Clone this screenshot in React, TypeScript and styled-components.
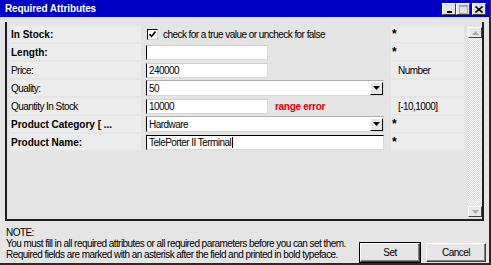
import React from 'react'
import styled, { createGlobalStyle } from 'styled-components'

const GlobalStyle = createGlobalStyle`
  html, body {
    margin: 0;
    padding: 0;
  }
  body {
    font-family: 'Liberation Sans', Arial, sans-serif;
    font-size: 10px;
    letter-spacing: -0.55px;
    color: #000;
  }
`

const Window = styled.div`
  width: 491px;
  height: 265px;
  box-sizing: border-box;
  background: #e5e5e5;
  border-right: 2px solid #2a2a2a;
  border-bottom: 2px solid #2a2a2a;
  display: flex;
  flex-direction: column;
  overflow: hidden;
`

const TitleBar = styled.div`
  height: 17px;
  flex: none;
  background: #0000c4;
  color: #fff;
  font-weight: bold;
  font-size: 10px;
  letter-spacing: -0.1px;
  display: flex;
  align-items: center;
  padding: 0 3px 0 5px;
`

const Title = styled.span`
  flex: 1;
`

const WinButtons = styled.div`
  display: flex;
  margin-top: 1px;
`

const WinButton = styled.div<{ $gap?: boolean }>`
  width: 14px;
  height: 12px;
  box-sizing: border-box;
  background: #e2e2e2;
  border-top: 1px solid #fff;
  border-left: 1px solid #fff;
  border-bottom: 1px solid #404040;
  border-right: 1px solid #404040;
  margin-left: ${p => (p.$gap ? '2px' : '0')};
  display: flex;
  align-items: center;
  justify-content: center;
`

const MinBar = styled.div`
  width: 5px;
  height: 2px;
  background: #000;
  margin-top: 5px;
`

const MaxBox = styled.div`
  width: 7px;
  height: 6px;
  border: 1px solid #a8a8a8;
  border-top-width: 2px;
`

const Body = styled.div`
  flex: 1;
  display: flex;
  flex-direction: column;
  padding: 5px 5px 0 5px;
  min-height: 0;
`

const Panel = styled.div`
  height: 197px;
  flex: none;
  display: flex;
  border-left: 2px solid #1e1e1e;
  border-right: 2px solid #1e1e1e;
  border-bottom: 2px solid #1e1e1e;
  background: #e4e4e4;
`

const Grid = styled.div`
  flex: 1;
  display: grid;
  grid-template-columns: 131px 250px 73px;
  grid-auto-rows: 16px;
  row-gap: 2px;
  align-content: start;
  padding: 4px 4px 0 3px;
`

const LabelCell = styled.div<{ $required?: boolean }>`
  background: #ececec;
  display: flex;
  align-items: center;
  padding-left: 1px;
  font-weight: ${p => (p.$required ? 'bold' : 'normal')};
  letter-spacing: ${p => (p.$required ? '0' : '-0.55px')};
  white-space: nowrap;
  overflow: hidden;
`

const FieldCell = styled.div`
  display: flex;
  align-items: center;
  padding-left: 5px;
  white-space: nowrap;
`

const InfoCell = styled.div<{ $mark?: boolean }>`
  background: #ececec;
  display: flex;
  align-items: center;
  padding-left: ${p => (p.$mark ? '1px' : '7px')};
  font-weight: ${p => (p.$mark ? 'bold' : 'normal')};
  font-size: ${p => (p.$mark ? '12px' : '10px')};
`

const TextField = styled.div<{ $wide?: boolean; $focused?: boolean }>`
  width: ${p => (p.$wide ? '238px' : '122px')};
  height: 15px;
  flex: none;
  box-sizing: border-box;
  background: #fff;
  border: 1px solid #d8d8d8;
  border-left: 1px solid #000;
  border-top: 1px solid ${p => (p.$focused ? '#000' : '#d0d0d0')};
  padding-left: 2px;
  display: flex;
  align-items: center;
  white-space: nowrap;
`

const Caret = styled.span`
  display: inline-block;
  width: 1px;
  height: 11px;
  background: #000;
  margin-left: 1px;
`

const Select = styled.div`
  width: 238px;
  height: 16px;
  box-sizing: border-box;
  background: #fff;
  border-left: 1px solid #000;
  border-top: 1px solid #b0b0b0;
  border-right: 1px solid #d8d8d8;
  border-bottom: 1px solid #d8d8d8;
  display: flex;
  align-items: center;
  padding-left: 2px;
`

const SelectValue = styled.span`
  flex: 1;
`

const ArrowButton = styled.div`
  width: 13px;
  height: 13px;
  box-sizing: border-box;
  background: #e6e6e6;
  border-top: 1px solid #fff;
  border-left: 1px solid #fff;
  border-bottom: 1px solid #000;
  border-right: 1px solid #000;
  display: flex;
  align-items: center;
  justify-content: center;
`

const Check = styled.div`
  width: 11px;
  height: 11px;
  flex: none;
  box-sizing: border-box;
  background: #fff;
  border-left: 1px solid #000;
  border-top: 1px solid #000;
  border-right: 1px solid #d0d0d0;
  border-bottom: 1px solid #d0d0d0;
  display: flex;
  align-items: center;
  justify-content: center;
  margin: 0 5px 0 1px;
`

const ErrorText = styled.span`
  color: #e00000;
  font-weight: bold;
  letter-spacing: -0.3px;
  margin-left: 7px;
`

const Scrollbar = styled.div`
  width: 14px;
  flex: none;
  margin: 5px 0 2px;
  display: flex;
  flex-direction: column;
  background: repeating-conic-gradient(#ffffff 0 25%, #d6d6d6 0 50%) 0 0 / 2px 2px;
`

const ScrollButton = styled.div`
  height: 11px;
  box-sizing: border-box;
  background: #e8e8e8;
  border-top: 1px solid #fff;
  border-left: 1px solid #fff;
  border-bottom: 1px solid #404040;
  border-right: 1px solid #404040;
  display: flex;
  align-items: center;
  justify-content: center;
`

const Track = styled.div`
  flex: 1;
`

const Footer = styled.div`
  flex: 1;
  display: flex;
  padding: 6px 0 1px 1px;
  margin-right: -2px;
`

const Note = styled.div`
  flex: 1;
  min-width: 0;
  line-height: 11px;
  white-space: nowrap;
`

const Buttons = styled.div`
  display: flex;
  flex: none;
  align-self: flex-end;
  gap: 6px;
`

const Button = styled.div<{ $default?: boolean }>`
  width: 60px;
  height: 19px;
  box-sizing: border-box;
  background: #e6e6e6;
  display: flex;
  align-items: center;
  justify-content: center;
  border: 1px solid;
  border-color: #fff #404040 #404040 #fff;
  box-shadow: ${p =>
    p.$default ? '0 0 0 1px #000, inset -1px -1px 0 #808080' : 'inset -1px -1px 0 #808080'};
`

const DownArrow = ({ color = '#000' }: { color?: string }) => (
  <svg width="7" height="4" viewBox="0 0 7 4">
    <path d="M0 0h7L3.5 4z" fill={color} />
  </svg>
)

const UpArrow = ({ color = '#000' }: { color?: string }) => (
  <svg width="7" height="4" viewBox="0 0 7 4">
    <path d="M0 4h7L3.5 0z" fill={color} />
  </svg>
)

const CloseGlyph = () => (
  <svg width="8" height="7" viewBox="0 0 8 7">
    <path d="M0.5 0.5L7.5 6.5M7.5 0.5L0.5 6.5" stroke="#000" strokeWidth="1.6" />
  </svg>
)

const CheckGlyph = () => (
  <svg width="7" height="7" viewBox="0 0 7 7">
    <path d="M0.5 3L2.5 5.5L6.5 0.5" stroke="#000" strokeWidth="1.7" fill="none" />
  </svg>
)

const App = () => {
  return (
    <Window>
      <GlobalStyle />
      <TitleBar>
        <Title>Required Attributes</Title>
        <WinButtons>
          <WinButton>
            <MinBar />
          </WinButton>
          <WinButton>
            <MaxBox />
          </WinButton>
          <WinButton $gap>
            <CloseGlyph />
          </WinButton>
        </WinButtons>
      </TitleBar>
      <Body>
        <Panel>
          <Grid>
            <LabelCell $required>In Stock:</LabelCell>
            <FieldCell>
              <Check>
                <CheckGlyph />
              </Check>
              check for a true value or uncheck for false
            </FieldCell>
            <InfoCell $mark>*</InfoCell>

            <LabelCell $required>Length:</LabelCell>
            <FieldCell>
              <TextField />
            </FieldCell>
            <InfoCell $mark>*</InfoCell>

            <LabelCell>Price:</LabelCell>
            <FieldCell>
              <TextField>240000</TextField>
            </FieldCell>
            <InfoCell>Number</InfoCell>

            <LabelCell>Quality:</LabelCell>
            <FieldCell>
              <Select>
                <SelectValue>50</SelectValue>
                <ArrowButton>
                  <DownArrow />
                </ArrowButton>
              </Select>
            </FieldCell>
            <InfoCell />

            <LabelCell>Quantity In Stock</LabelCell>
            <FieldCell>
              <TextField>10000</TextField>
              <ErrorText>range error</ErrorText>
            </FieldCell>
            <InfoCell>[-10,1000]</InfoCell>

            <LabelCell $required>Product Category [ ...</LabelCell>
            <FieldCell>
              <Select>
                <SelectValue>Hardware</SelectValue>
                <ArrowButton>
                  <DownArrow />
                </ArrowButton>
              </Select>
            </FieldCell>
            <InfoCell $mark>*</InfoCell>

            <LabelCell $required>Product Name:</LabelCell>
            <FieldCell>
              <TextField $wide $focused>
                TelePorter II Terminal
                <Caret />
              </TextField>
            </FieldCell>
            <InfoCell $mark>*</InfoCell>
          </Grid>
          <Scrollbar>
            <ScrollButton>
              <UpArrow color="#a8a8a8" />
            </ScrollButton>
            <Track />
            <ScrollButton>
              <DownArrow color="#a8a8a8" />
            </ScrollButton>
          </Scrollbar>
        </Panel>
        <Footer>
          <Note>
            NOTE:
            <br />
            You must fill in all required attributes or all required parameters before you can set them.
            <br />
            Required fields are marked with an asterisk after the field and printed in bold typeface.
          </Note>
          <Buttons>
            <Button $default>Set</Button>
            <Button>Cancel</Button>
          </Buttons>
        </Footer>
      </Body>
    </Window>
  )
}

export default App
